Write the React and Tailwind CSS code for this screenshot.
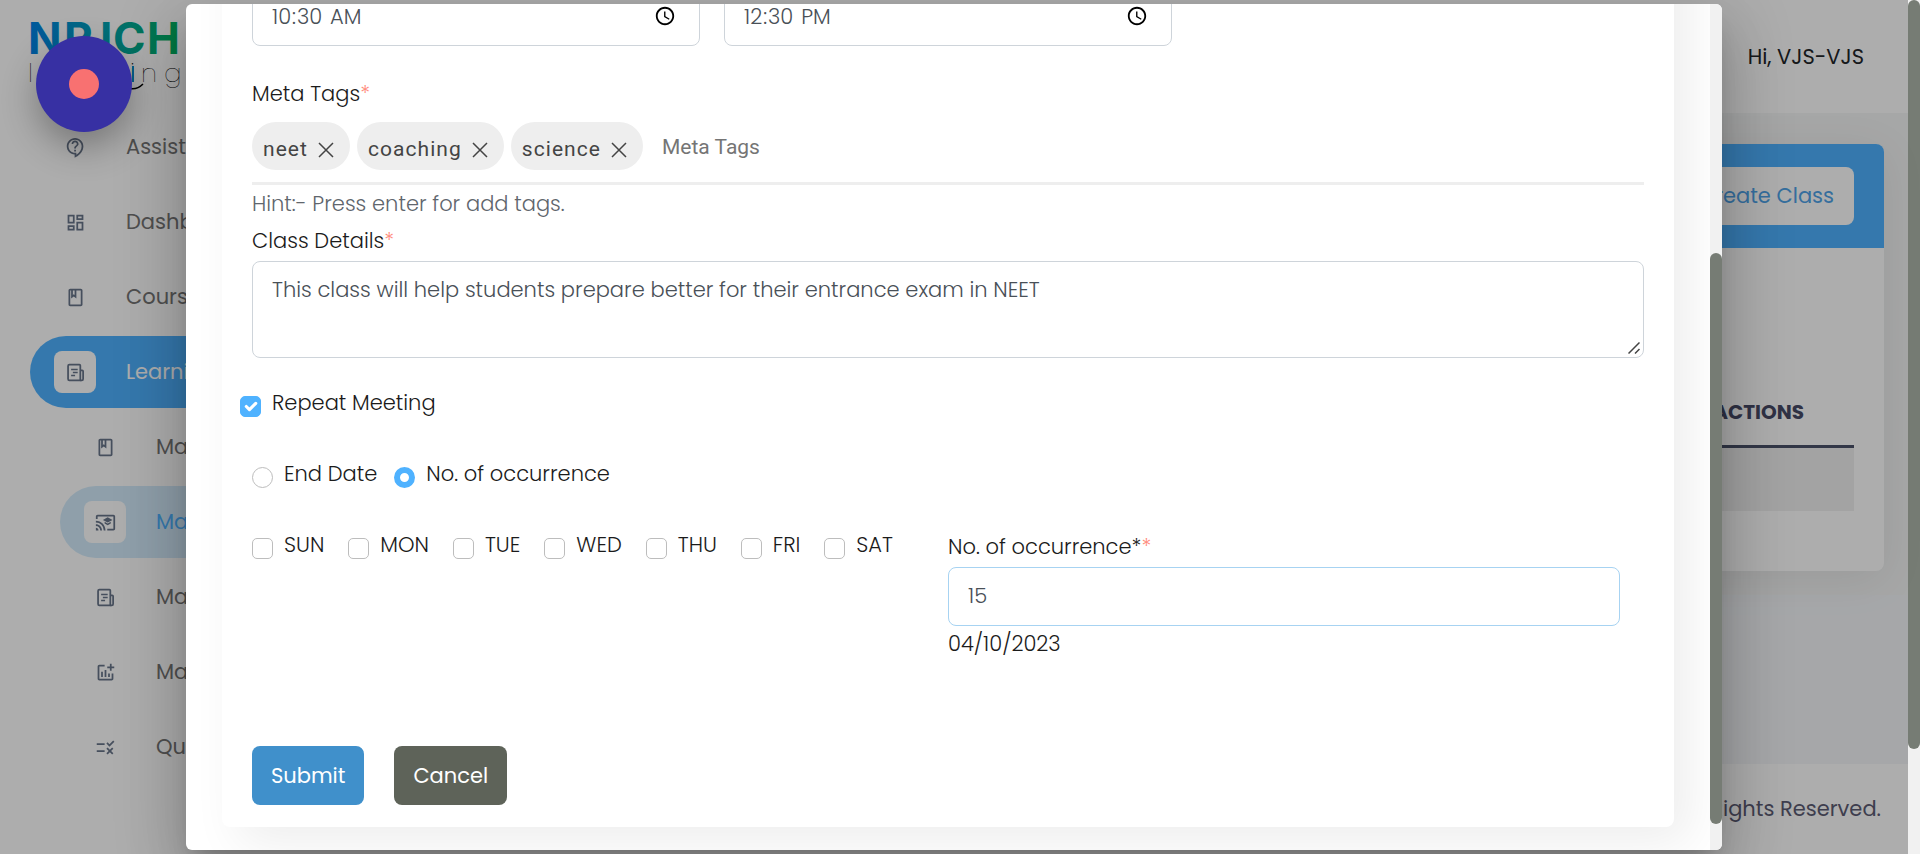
import React, { useState } from "react";
import {
  MdOutlineContactSupport,
  MdOutlineDashboard,
  MdOutlineClass,
  MdOutlineCastForEducation,
  MdOutlineAddchart,
  MdOutlineRule,
} from "react-icons/md";

function NewsIcon({ className }) {
  return (
    <svg viewBox="0 0 24 24" className={className} fill="none" stroke="currentColor" strokeWidth="2" aria-hidden="true">
      <path d="M5 3h11.5a1 1 0 0 1 1 1v17H5a1.500 1.500 0 0 1-1.500-1.500v-15A1.500 1.500 0 0 1 5 3z" />
      <path d="M17.500 9.500h2.200a1 1 0 0 1 1 1v9a1.500 1.500 0 0 1-1.500 1.500h-1.700" />
      <path d="M7 8.500h7.500M9 12h5.500M7 15.500h4.500" strokeWidth="1.700" />
    </svg>
  );
}

function Logo() {
  return (
    <svg viewBox="0 0 156 84" className="h-[84px] w-[156px] shrink-0 overflow-visible" role="img" aria-label="NRICH learning">
      <defs>
        <linearGradient id="brand" x1="0" x2="1" y1="0" y2="0">
          <stop offset="0" stopColor="#0081e8" />
          <stop offset="0.5" stopColor="#00a3b4" />
          <stop offset="1" stopColor="#00b35a" />
        </linearGradient>
      </defs>
      <text x="-2 34 70 83 117" y="40" fill="url(#brand)" fontFamily="Inter, sans-serif" fontWeight="700" fontSize="44">
        NRICH
      </text>
      <text x="-2 14 34 54 72 100 111 134" y="68" fill="#000" fontFamily="Poppins, Lato, sans-serif" fontWeight="200" fontSize="26">
        learning
      </text>
      <path d="M98 74c6 2 11 0 15-4" fill="none" stroke="#000" strokeWidth="1.500" />
      <path d="M103 52v16" stroke="#0a8fd0" strokeWidth="2" />
    </svg>
  );
}

const NAV = [
  { label: "Assistance", Icon: MdOutlineContactSupport },
  { label: "Dashboard", Icon: MdOutlineDashboard },
  { label: "Courses", Icon: MdOutlineClass },
  { label: "Learning", Icon: NewsIcon, active: true },
];

const SUBNAV = [
  { label: "Manage", Icon: MdOutlineClass },
  { label: "Manage", Icon: MdOutlineCastForEducation, active: true },
  { label: "Manage", Icon: NewsIcon },
  { label: "Manage", Icon: MdOutlineAddchart },
  { label: "Quiz", Icon: MdOutlineRule },
];

function NavItem({ label, Icon, active, sub }) {
  const look = !active
    ? "text-[#757575]"
    : sub
      ? "bg-[#d3ebfb] text-[#4fb2ff]"
      : "bg-[#4fb2ff] text-white";
  return (
    <a href="#" className={`flex h-[72px] items-center gap-[30px] rounded-l-full pl-6 font-normal ${look}`}>
      <span
        className={`flex size-[42px] shrink-0 items-center justify-center rounded-lg text-[#68758a] ${active ? "bg-white" : ""}`}
      >
        <Icon className="size-[21px]" />
      </span>
      {label}
    </a>
  );
}

function Sidebar() {
  return (
    <aside className="flex w-[270px] shrink-0 flex-col bg-white pl-[30px]">
      <div className="h-[111px] shrink-0 pt-[14px]">
        <Logo />
      </div>
      <nav className="flex flex-col gap-[3px]">
        {NAV.map((item) => (
          <NavItem key={item.label} {...item} />
        ))}
        <div className="flex flex-col gap-[3px] pl-[30px]">
          {SUBNAV.map((item, i) => (
            <NavItem key={i} {...item} sub />
          ))}
        </div>
      </nav>
    </aside>
  );
}

function ClassesPage() {
  return (
    <div className="flex min-w-0 grow flex-col bg-[#f5f7fa]">
      <header className="flex h-[113px] shrink-0 items-center justify-end bg-white pr-11 font-normal text-[#212529]">
        Hi, VJS-VJS
      </header>
      <main className="bg-[#f5f6f6] px-6 pt-[31px] pb-6">
        <section className="rounded-lg bg-white shadow-[0_8px_45px_rgba(0,0,0,0.08)]">
          <div className="flex h-[104px] items-center justify-end rounded-t-lg bg-[#4fb2ff] pr-[30px]">
            <button type="button" className="h-[58px] rounded-lg bg-white px-5 font-normal text-[#4fa3e8]">
              Create Class
            </button>
          </div>
          <div className="px-[30px] pt-[132px] pb-[60px]">
            <table className="w-full border-collapse">
              <thead>
                <tr className="h-[66px] border-b-[3px] border-[#4a5269]">
                  <th className="pr-[50px] text-right text-[20px] font-bold text-[#474b66]">ACTIONS</th>
                </tr>
              </thead>
              <tbody>
                <tr className="h-[65px] bg-[#f0f0f0]">
                  <td />
                </tr>
              </tbody>
            </table>
          </div>
        </section>
      </main>
      <footer className="mt-auto flex h-[90px] shrink-0 items-center justify-end bg-white pr-[27px] font-normal text-[#5c5c74]">
        All Rights Reserved.
      </footer>
    </div>
  );
}

function Required() {
  return <span className="text-[#ff8c7d]">*</span>;
}

function TimeField({ label, value }) {
  return (
    <input
      type="time"
      aria-label={label}
      defaultValue={value}
      className="h-[59px] w-full rounded-lg border border-[#ced4da] bg-white pr-5 pl-[18px] text-[#495057] outline-none [&::-webkit-datetime-edit-ampm-field]:pl-1"
    />
  );
}

function Tick({ id, label, checked }) {
  return (
    <div className="flex h-7 items-end gap-[11px]">
      <span className="grid size-[21px] place-items-center">
        <input
          id={id}
          type="checkbox"
          defaultChecked={checked}
          className="peer col-start-1 row-start-1 size-[21px] appearance-none rounded-[5px] border border-[#bdbdbd] bg-white checked:border-[#4fb2ff] checked:bg-[#4fb2ff]"
        />
        <svg viewBox="0 0 20 20" className="pointer-events-none col-start-1 row-start-1 hidden size-[21px] peer-checked:block" fill="none" stroke="#fff" strokeWidth="3" strokeLinecap="round" strokeLinejoin="round" aria-hidden="true">
          <path d="M6 10l3 3 6-6" />
        </svg>
      </span>
      <label htmlFor={id} className="leading-7 whitespace-nowrap">
        {label}
      </label>
    </div>
  );
}

function Choice({ id, label, checked }) {
  return (
    <div className="flex h-7 items-end gap-[11px]">
      <input
        id={id}
        type="radio"
        name="repeat-end"
        defaultChecked={checked}
        className="size-[21px] appearance-none rounded-full border border-[#bdbdbd] bg-white checked:border-[6px] checked:border-[#4fb2ff]"
      />
      <label htmlFor={id} className="leading-7 whitespace-nowrap">
        {label}
      </label>
    </div>
  );
}

function TagChip({ label, onRemove }) {
  return (
    <span className="flex h-12 items-center gap-[10px] rounded-full bg-[#eee] pt-[7px] pr-4 pl-[11px] font-['Roboto',sans-serif] font-normal tracking-wider text-[#444]">
      {label}
      <button type="button" aria-label={`Remove ${label}`} onClick={onRemove}>
        <svg viewBox="0 0 16 16" className="size-4" stroke="#444" strokeWidth="1.500" aria-hidden="true">
          <path d="M1 1l14 14M15 1L1 15" />
        </svg>
      </button>
    </span>
  );
}

const DAYS = ["SUN", "MON", "TUE", "WED", "THU", "FRI", "SAT"];

function ClassForm() {
  const [tags, setTags] = useState(["neet", "coaching", "science"]);
  return (
    <form className="mr-9 ml-9 rounded-lg bg-white px-[30px] pt-16 pb-[22px] shadow-[16px_16px_48px_rgba(0,0,0,0.07)]">
      <div className="grid grid-cols-3 gap-6">
        <TimeField label="Start time" value="10:30" />
        <TimeField label="End time" value="12:30" />
      </div>

      <label htmlFor="tags" className="mt-8 mb-3 block leading-8">
        Meta Tags
        <Required />
      </label>
      <div className="flex gap-[7px] border-b-[3px] border-[#eee] pb-3">
        {tags.map((t) => (
          <TagChip key={t} label={t} onRemove={() => setTags(tags.filter((x) => x !== t))} />
        ))}
        <input
          id="tags"
          placeholder="Meta Tags"
          className="ml-3 min-w-0 grow pt-1 font-['Roboto',sans-serif] font-normal outline-none placeholder:text-[#757575]"
        />
      </div>
      <p className="mt-[5px] leading-7 text-[#5f666d]">Hint:- Press enter for add tags.</p>

      <label htmlFor="details" className="mt-[7px] mb-1 block leading-8">
        Class Details
        <Required />
      </label>
      <div className="relative">
        <textarea
          id="details"
          defaultValue="This class will help students prepare better for their entrance exam in NEET"
          className="block h-[97px] w-full resize-none rounded-lg border border-[#ced4da] bg-white px-[19px] py-3 leading-8 text-[#495057] outline-none"
        />
        <svg viewBox="0 0 12 12" className="pointer-events-none absolute right-1 bottom-1 size-3" stroke="#444" strokeWidth="1.500" aria-hidden="true">
          <path d="M0.500 11.500l11-11M7 11.500l4.500-4.500" />
        </svg>
      </div>

      <div className="mt-[31px] -ml-3">
        <Tick id="repeat" label="Repeat Meeting" checked />
      </div>

      <div className="mt-[43px] flex gap-[17px]">
        <Choice id="end-date" label="End Date" />
        <Choice id="occurrence-mode" label="No. of occurrence" checked />
      </div>

      <div className="mt-[43px] grid grid-cols-2">
        <div className="flex gap-6">
          {DAYS.map((d) => (
            <Tick key={d} id={d} label={d} />
          ))}
        </div>
        <div className="pr-6">
          <label htmlFor="count" className="mb-1 block leading-8">
            No. of occurrence*
            <Required />
          </label>
          <input
            id="count"
            defaultValue="15"
            className="block h-[59px] w-full rounded-lg border border-[#a7d3f2] bg-white px-[19px] pb-[2px] text-[#495057] outline-none"
          />
          <p className="mt-[2px] leading-8">04/10/2023</p>
        </div>
      </div>

      <div className="mt-[86px] flex gap-[30px] font-normal text-white">
        <button type="submit" className="h-[59px] rounded-lg bg-[#4090cb] px-[19px]">
          Submit
        </button>
        <button type="button" className="h-[59px] rounded-lg bg-[#5e6359] px-[19px]">
          Cancel
        </button>
      </div>
    </form>
  );
}

export default function App() {
  return (
    <div className="relative flex h-screen overflow-hidden font-['Poppins','Inter',sans-serif] text-[21px] font-light text-[#1b1b1b]">
      <div className="relative flex min-w-0 grow">
        <Sidebar />
        <ClassesPage />

        <div className="absolute inset-0 flex justify-center overflow-hidden bg-black/32 py-1">
          <div
            role="dialog"
            aria-label="Class"
            className="flex w-[80vw] rounded-md bg-white shadow-[0_16px_22px_-10px_rgba(0,0,0,0.2),0_36px_57px_4px_rgba(0,0,0,0.14),0_14px_69px_12px_rgba(0,0,0,0.12)]"
          >
            <div className="flex min-w-0 grow flex-col justify-end overflow-hidden rounded-l-md pb-[23px]">
              <ClassForm />
            </div>
            <div className="w-3 shrink-0 rounded-r-md bg-[#f1f1f1] pt-[249px] pb-[26px]">
              <div className="h-full rounded-full bg-[#767c74]" />
            </div>
          </div>
        </div>
      </div>

      <div className="w-3 shrink-0 bg-[#f1f1f1] pb-[105px]">
        <div className="h-full rounded-full bg-[#767c74]" />
      </div>

      <button
        type="button"
        aria-label="Record"
        className="absolute top-9 left-9 flex size-24 items-center justify-center rounded-full bg-[#3730a3] shadow-[0_15px_35px_rgba(0,0,0,0.3)]"
      >
        <span className="size-[30px] rounded-full bg-[#f87171]" />
      </button>
    </div>
  );
}
